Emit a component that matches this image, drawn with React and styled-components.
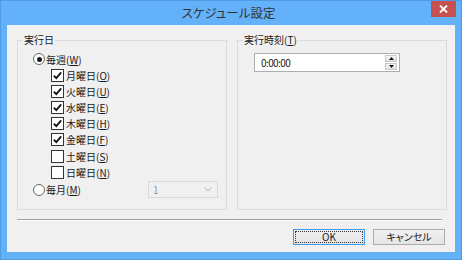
import React from 'react';
import styled, { createGlobalStyle } from 'styled-components';

const GlobalStyle = createGlobalStyle`
  html, body {
    margin: 0;
    padding: 0;
    background: #ffffff;
  }
  body {
    font-family: "Noto Sans CJK JP", "Noto Sans", sans-serif;
    font-feature-settings: "palt";
    color: #1a1a1a;
  }
`;

const Window = styled.div`
  width: 462px;
  height: 260px;
  box-sizing: border-box;
  background: #63b1f8;
  border: 1px solid #4f9be6;
  display: flex;
  flex-direction: column;
`;

const TitleBar = styled.div`
  height: 24px;
  display: grid;
  grid-template-columns: 1fr auto 1fr;
  align-items: start;
  padding-right: 5px;
`;

const Title = styled.div`
  grid-column: 2;
  font-size: 12.5px;
  line-height: 23px;
  color: #333333;
`;

const CloseButton = styled.div`
  grid-column: 3;
  justify-self: end;
  width: 25px;
  height: 16px;
  background: #c75050;
  display: flex;
  align-items: center;
  justify-content: center;
`;

const Client = styled.div`
  flex: 1;
  margin: 0 6px 7px 6px;
  background: #f0f0f0;
  padding: 8px 8px 7px 10px;
  display: flex;
  flex-direction: column;
`;

const GroupRow = styled.div`
  display: flex;
  gap: 10px;
  height: 177px;
`;

const Group = styled.fieldset`
  flex: 1;
  margin: 0;
  padding: 0;
  min-width: 0;
  border: 1px solid #dcdcdc;
`;

const Legend = styled.legend`
  font-size: 10px;
  line-height: 14px;
  margin-left: 5px;
  padding: 0 1px;
`;

const GroupBody = styled.div`
  padding: ${p => p.$top}px 0 0 ${p => p.$left}px;
  display: flex;
  flex-direction: column;
`;

const OptionRow = styled.label`
  display: flex;
  align-items: center;
  height: ${p => p.$h}px;
  font-size: 10px;
  gap: ${p => p.$gap}px;
  white-space: nowrap;
`;

const DayList = styled.div`
  padding-left: 18px;
  display: flex;
  flex-direction: column;
`;

const MonthRow = styled.div`
  margin-top: 1px;
  display: grid;
  grid-template-columns: 115px 70px;
  align-items: center;
  height: 17px;
`;

const RadioCircle = styled.span`
  width: 12px;
  height: 12px;
  box-sizing: border-box;
  border-radius: 50%;
  border: 1px solid #6a6a6a;
  background: #ffffff;
  display: flex;
  align-items: center;
  justify-content: center;
  flex-shrink: 0;

  &::after {
    content: "";
    width: 5px;
    height: 5px;
    border-radius: 50%;
    background: ${p => (p.$on ? '#1a1a1a' : 'transparent')};
  }
`;

const CheckBox = styled.span`
  width: 13px;
  height: 13px;
  box-sizing: border-box;
  border: 1px solid #333333;
  background: #ffffff;
  display: flex;
  align-items: center;
  justify-content: center;
  flex-shrink: 0;
`;

const Key = styled.span`
  text-decoration: underline;
  text-underline-offset: 1px;
`;

const Combo = styled.div`
  height: 17px;
  box-sizing: border-box;
  border: 1px solid #d9d9d9;
  background: #f0f0f0;
  display: flex;
  align-items: center;
  justify-content: space-between;
  padding: 0 5px 0 4px;
  font-size: 10px;
  color: #9a9a9a;
`;

const TimeBox = styled.div`
  margin-top: 6px;
  width: 146px;
  height: 19px;
  box-sizing: border-box;
  border: 1px solid #abadb3;
  background: #ffffff;
  display: flex;
  align-items: center;
  justify-content: space-between;
  padding: 0 2px 0 6px;
`;

const TimeText = styled.span`
  font-size: 10px;
  letter-spacing: -0.6px;
`;

const Spin = styled.div`
  display: flex;
  flex-direction: column;
  gap: 1px;
`;

const SpinButton = styled.div`
  width: 12px;
  height: 7px;
  box-sizing: border-box;
  border: 1px solid #c8c8c8;
  background: linear-gradient(#f4f4f4, #e3e3e3);
  display: flex;
  align-items: center;
  justify-content: center;
`;

const Separator = styled.div`
  margin: 9px 5px 0 0;
  border-top: 1px solid #a0a0a0;
  border-bottom: 1px solid #ffffff;
`;

const ButtonBar = styled.div`
  margin-top: 8px;
  display: flex;
  justify-content: flex-end;
  gap: 8px;
  padding-right: 2px;
`;

const Button = styled.button`
  width: 72px;
  height: 16px;
  box-sizing: border-box;
  padding: 0;
  font-family: inherit;
  font-feature-settings: "palt";
  font-size: 10px;
  line-height: 12px;
  color: #1a1a1a;
  background: linear-gradient(#f0f0f0, #e5e5e5);
  border: 1px solid ${p => (p.$default ? '#3c9cf0' : '#acacac')};
  outline: ${p => (p.$default ? '1px dotted #333' : 'none')};
  outline-offset: -3px;
`;

const days = [
  ['月曜日', 'O', true],
  ['火曜日', 'U', true],
  ['水曜日', 'E', true],
  ['木曜日', 'H', true],
  ['金曜日', 'F', true],
  ['土曜日', 'S', false],
  ['日曜日', 'N', false],
];

function Check({ on }) {
  return (
    <CheckBox>
      {on && (
        <svg width="11" height="11" viewBox="0 0 11 11">
          <path d="M1.8 5.6 L4.3 8.2 L9.2 2.4" fill="none" stroke="#111" strokeWidth="1.8" />
        </svg>
      )}
    </CheckBox>
  );
}

function Label({ text, k }) {
  return (
    <span>
      {text}(<Key>{k}</Key>)
    </span>
  );
}

export default function App() {
  return (
    <>
      <GlobalStyle />
      <Window>
        <TitleBar>
          <Title>スケジュール設定</Title>
          <CloseButton>
            <svg width="9" height="8" viewBox="0 0 9 8">
              <path d="M1 0.5 L8 7.5 M8 0.5 L1 7.5" stroke="#fff" strokeWidth="1.8" />
            </svg>
          </CloseButton>
        </TitleBar>
        <Client>
          <GroupRow>
            <Group>
              <Legend>実行日</Legend>
              <GroupBody $top={4} $left={15}>
                <OptionRow $h={16} $gap={1}>
                  <RadioCircle $on />
                  <Label text="毎週" k="W" />
                </OptionRow>
                <DayList>
                  {days.map(([name, k, on]) => (
                    <OptionRow key={name} $h={16.2} $gap={2}>
                      <Check on={on} />
                      <Label text={name} k={k} />
                    </OptionRow>
                  ))}
                </DayList>
                <MonthRow>
                  <OptionRow $h={17} $gap={1}>
                    <RadioCircle />
                    <Label text="毎月" k="M" />
                  </OptionRow>
                  <Combo>
                    <span>1</span>
                    <svg width="8" height="5" viewBox="0 0 8 5">
                      <path d="M0.5 0.5 L4 4 L7.5 0.5" fill="none" stroke="#a8a8a8" strokeWidth="1" />
                    </svg>
                  </Combo>
                </MonthRow>
              </GroupBody>
            </Group>
            <Group>
              <Legend>
                <Label text="実行時刻" k="T" />
              </Legend>
              <GroupBody $top={0} $left={16}>
                <TimeBox>
                  <TimeText>0:00:00</TimeText>
                  <Spin>
                    <SpinButton>
                      <svg width="5" height="3" viewBox="0 0 5 3">
                        <path d="M0 3 L2.5 0 L5 3 Z" fill="#111" />
                      </svg>
                    </SpinButton>
                    <SpinButton>
                      <svg width="5" height="3" viewBox="0 0 5 3">
                        <path d="M0 0 L2.5 3 L5 0 Z" fill="#111" />
                      </svg>
                    </SpinButton>
                  </Spin>
                </TimeBox>
              </GroupBody>
            </Group>
          </GroupRow>
          <Separator />
          <ButtonBar>
            <Button $default>OK</Button>
            <Button>キャンセル</Button>
          </ButtonBar>
        </Client>
      </Window>
    </>
  );
}
